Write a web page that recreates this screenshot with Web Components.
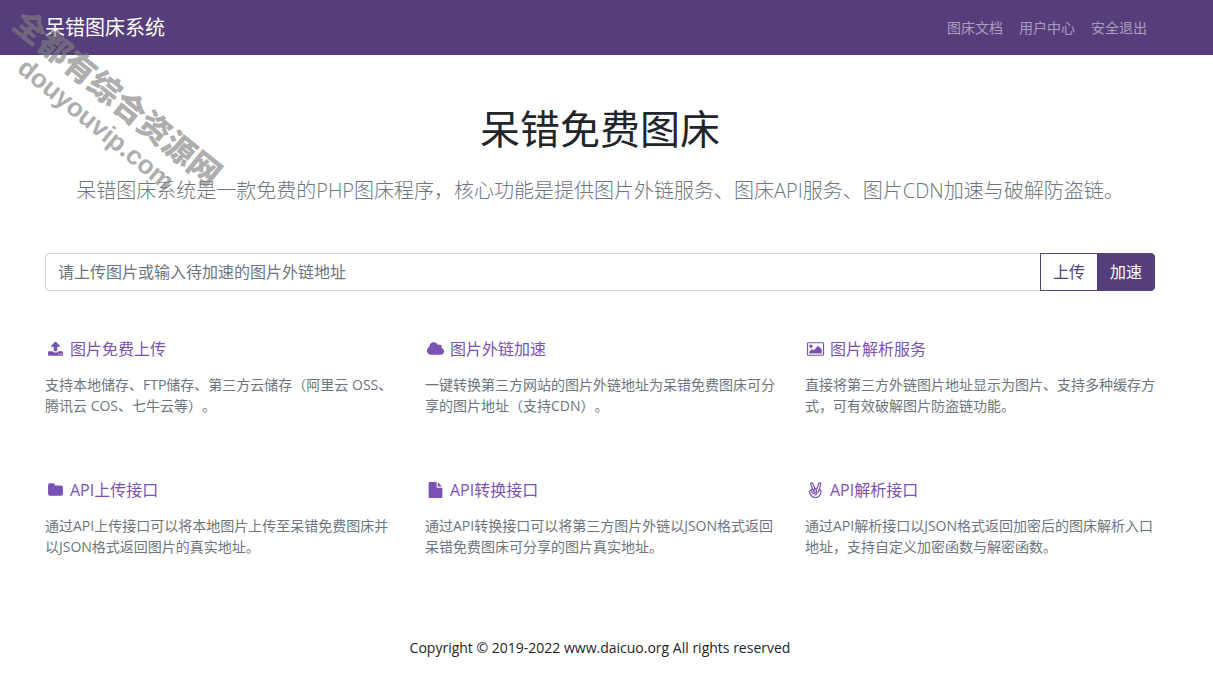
<!DOCTYPE html>
<html lang="zh-CN">
<head>
<meta charset="utf-8">
<meta name="viewport" content="width=device-width, initial-scale=1">
<title>呆错图床系统</title>
<style>
  body {
    margin: 0;
    background: #fff;
    color: #212529;
    font: 400 16px/24px "Open Sans", "Noto Sans CJK SC", sans-serif;
    text-spacing-trim: space-all;
    --brand: #563d7c;
    --accent: #7952b3;
    --muted: #6c757d;
    --gutter: 13px;
  }
</style>
</head>
<body>
<image-host-page></image-host-page>

<script>
const define = (name, markup) => {
  const template = document.createElement('template');
  template.innerHTML = markup;
  customElements.define(name, class extends HTMLElement {
    constructor() {
      super();
      this.attachShadow({ mode: 'open' }).append(template.content.cloneNode(true));
    }
  });
};

const icons = {
  upload: ['0 0 1792 1792', '<path d="M1344 1472q0-26-19-45t-45-19-45 19-19 45 19 45 45 19 45-19 19-45zm256 0q0-26-19-45t-45-19-45 19-19 45 19 45 45 19 45-19 19-45zm128-224v320q0 40-28 68t-68 28h-1472q-40 0-68-28t-28-68v-320q0-40 28-68t68-28h427q21 56 70.5 92t110.5 36h256q61 0 110.5-36t70.5-92h427q40 0 68 28t28 68zm-325-648q-17 40-59 40h-256v448q0 26-19 45t-45 19h-256q-26 0-45-19t-19-45v-448h-256q-42 0-59-40-17-39 14-69l448-448q18-19 45-19t45 19l448 448q31 30 14 69z"/>'],
  cloud: ['0 0 2048 1792', '<path d="M1984 1152q0 159-112.5 271.5t-271.5 112.5h-1088q-185 0-316.5-131.5t-131.5-316.5q0-132 71-241.5t187-163.5q-2-28-2-43 0-212 150-362t362-150q158 0 286.5 88t187.5 230q70-62 166-62 106 0 181 75t75 181q0 75-41 138 129 30 213 134.5t84 239.5z"/>'],
  image: ['0 0 2048 1792', '<path d="M704 576q0 80-56 136t-136 56-136-56-56-136 56-136 136-56 136 56 56 136zm1024 384v448h-1408v-192l320-320 160 160 512-512zm96-704h-1600q-13 0-22.5 9.5t-9.5 22.5v1216q0 13 9.5 22.5t22.5 9.5h1600q13 0 22.5-9.5t9.5-22.5v-1216q0-13-9.5-22.5t-22.5-9.5zm160 32v1216q0 66-47 113t-113 47h-1600q-66 0-113-47t-47-113v-1216q0-66 47-113t113-47h1600q66 0 113 47t47 113z"/>'],
  folder: ['0 0 1792 1792', '<path d="M1728 608v704q0 92-66 158t-158 66h-1216q-92 0-158-66t-66-158v-960q0-92 66-158t158-66h320q92 0 158 66t66 158v32h672q92 0 158 66t66 158z"/>'],
  file: ['0 0 1792 1792', '<path d="M1152 512v-472q22 14 36 28l408 408q14 14 28 36h-472zm-128 32q0 40 28 68t68 28h544v1056q0 40-28 68t-68 28h-1344q-40 0-68-28t-28-68v-1600q0-40 28-68t68-28h800v544z"/>'],
  peace: ['0 0 16 16', '<g fill="none" stroke="currentColor" stroke-width="1.2" stroke-linejoin="round" stroke-linecap="round"><path d="M5.1 7.2 3.2 2.3C2.8.9 4.7.2 5.3 1.5L7.4 6.6 9.5 6.5 11.3 1.5C11.8.2 13.6.8 13.2 2.2L11.8 7.6 13.2 8.3C13.8 9 13.5 10.6 12.9 12.2 12 14.6 10.6 15.5 8 15.5 5.4 15.5 4.2 14.5 3 12.8L2.4 11.6C1.9 10.1 2.4 8.6 3.3 8Z"/><path d="M4.6 10.5 3.9 8.9C3.5 7.6 5 7 5.6 8L6.4 9.8M6.8 9 6.5 8C6.3 6.7 7.8 6.2 8.4 7.3L9 9C9.3 10.4 7.7 10.9 7.1 9.8M4.7 12 8 10.6C9.4 10 10 11.6 8.9 12.2L7.4 13M11.8 7.6 10.7 10.2"/></g>']
};

customElements.define('feature-icon', class extends HTMLElement {
  constructor() {
    super();
    this.attachShadow({ mode: 'open' });
  }
  connectedCallback() {
    const [box, shapes] = icons[this.getAttribute('name')];
    this.shadowRoot.innerHTML = `
      <style>
        :host { display: block; width: 21px; height: 16px; flex: none; }
        svg { display: block; width: 100%; height: 100%; fill: currentColor; }
      </style>
      <svg viewBox="${box}" aria-hidden="true">${shapes}</svg>`;
  }
});

define('site-header', `
  <style>
    :host { display: block; background: var(--brand); padding-right: var(--gutter); }
    .bar { max-width: 1110px; margin: 0 auto; padding: 0 15px; height: 55px;
           display: flex; align-items: center; justify-content: space-between; }
    .brand { color: #fff; font-size: 20px; line-height: 30px; text-decoration: none; }
    nav { display: flex; gap: 16px; padding-right: 8px; font-size: 14px; line-height: 21px; color: rgba(255, 255, 255, .5); }
    ::slotted(a) { color: inherit; text-decoration: none; }
  </style>
  <header class="bar">
    <a class="brand" href="#">呆错图床系统</a>
    <nav><slot></slot></nav>
  </header>`);

define('site-intro', `
  <style>
    :host { display: block; text-align: center; }
    h1 { margin: 0 0 23px; font-size: 40px; font-weight: 400; line-height: 48px; }
    p { margin: 0; font-size: 20px; font-weight: 300; line-height: 30px; color: var(--muted); }
  </style>
  <h1><slot name="title"></slot></h1>
  <p><slot></slot></p>`);

define('link-form', `
  <style>
    :host { display: block; }
    form { display: flex; margin: 0; }
    input, button { box-sizing: border-box; height: 38px; margin: 0; padding: 6px 12px;
                    font: inherit; border: 1px solid var(--brand); }
    input { flex: 1; min-width: 0; border-color: #ced4da; border-radius: 4px 0 0 4px; color: #495057; outline: 0; }
    input::placeholder { color: var(--muted); opacity: 1; }
    button { margin-left: -1px; background: #fff; color: var(--brand); cursor: pointer; }
    .go { background: var(--brand); color: #fff; border-radius: 0 4px 4px 0; }
  </style>
  <form>
    <input type="text" aria-label="图片外链地址" placeholder="请上传图片或输入待加速的图片外链地址">
    <button type="button">上传</button>
    <button type="button" class="go">加速</button>
  </form>`);

define('feature-card', `
  <style>
    :host { display: block; }
    h2 { display: flex; align-items: center; gap: 4px; margin: 0 0 13px;
         font-size: 16px; font-weight: 400; line-height: 24px; color: var(--accent); }
    p { margin: 0; font-size: 14px; line-height: 21px; color: var(--muted); }
  </style>
  <h2><slot name="icon"></slot><slot name="title"></slot></h2>
  <p><slot></slot></p>`);

define('feature-grid', `
  <style>
    :host { display: grid; grid-template-columns: repeat(3, minmax(0, 1fr)); gap: 62px 30px; }
    @media (max-width: 767px) { :host { grid-template-columns: 1fr; gap: 32px; } }
  </style>
  <slot></slot>`);

define('site-footer', `
  <style>
    :host { display: block; text-align: center; font-size: 14px; line-height: 21px; }
  </style>
  <footer><slot></slot></footer>`);

define('site-watermark', `
  <style>
    :host { position: absolute; left: -23px; top: 77px; width: 260px; transform: rotate(39deg);
            text-align: center; font-weight: 700; line-height: 34px; white-space: nowrap;
            color: #808080; opacity: .63; pointer-events: none; }
    .name { font-size: 32px; font-weight: 900; }
    .url { font-family: "Liberation Sans", sans-serif; font-size: 26px; }
  </style>
  <div class="name">全都有综合资源网</div>
  <div class="url">douyouvip.com</div>`);

define('image-host-page', `
  <style>
    :host { display: block; position: relative; overflow: hidden; }
    .content { padding: 50px var(--gutter) 27px 0; }
    main, site-footer { max-width: 1110px; margin: 0 auto; padding: 0 15px; }
    link-form { margin: 47px 0 46px; }
    site-footer { margin-top: 80px; }
  </style>
  <site-header>
    <a href="#docs">图床文档</a>
    <a href="#user">用户中心</a>
    <a href="#logout">安全退出</a>
  </site-header>
  <div class="content">
    <main>
      <site-intro>
        <span slot="title">呆错免费图床</span>
        呆错图床系统是一款免费的PHP图床程序，核心功能是提供图片外链服务、图床API服务、图片CDN加速与破解防盗链。
      </site-intro>
      <link-form></link-form>
      <feature-grid>
        <feature-card>
          <feature-icon slot="icon" name="upload"></feature-icon>
          <span slot="title">图片免费上传</span>
          支持本地储存、FTP储存、第三方云储存（阿里云 OSS、腾讯云 COS、七牛云等）。
        </feature-card>
        <feature-card>
          <feature-icon slot="icon" name="cloud"></feature-icon>
          <span slot="title">图片外链加速</span>
          一键转换第三方网站的图片外链地址为呆错免费图床可分享的图片地址（支持CDN）。
        </feature-card>
        <feature-card>
          <feature-icon slot="icon" name="image"></feature-icon>
          <span slot="title">图片解析服务</span>
          直接将第三方外链图片地址显示为图片、支持多种缓存方式，可有效破解图片防盗链功能。
        </feature-card>
        <feature-card>
          <feature-icon slot="icon" name="folder"></feature-icon>
          <span slot="title">API上传接口</span>
          通过API上传接口可以将本地图片上传至呆错免费图床并以JSON格式返回图片的真实地址。
        </feature-card>
        <feature-card>
          <feature-icon slot="icon" name="file"></feature-icon>
          <span slot="title">API转换接口</span>
          通过API转换接口可以将第三方图片外链以JSON格式返回呆错免费图床可分享的图片真实地址。
        </feature-card>
        <feature-card>
          <feature-icon slot="icon" name="peace"></feature-icon>
          <span slot="title">API解析接口</span>
          通过API解析接口以JSON格式返回加密后的图床解析入口地址，支持自定义加密函数与解密函数。
        </feature-card>
      </feature-grid>
    </main>
    <site-footer>Copyright © 2019-2022 www.daicuo.org All rights reserved</site-footer>
  </div>
  <site-watermark></site-watermark>`);
</script>
</body>
</html>
